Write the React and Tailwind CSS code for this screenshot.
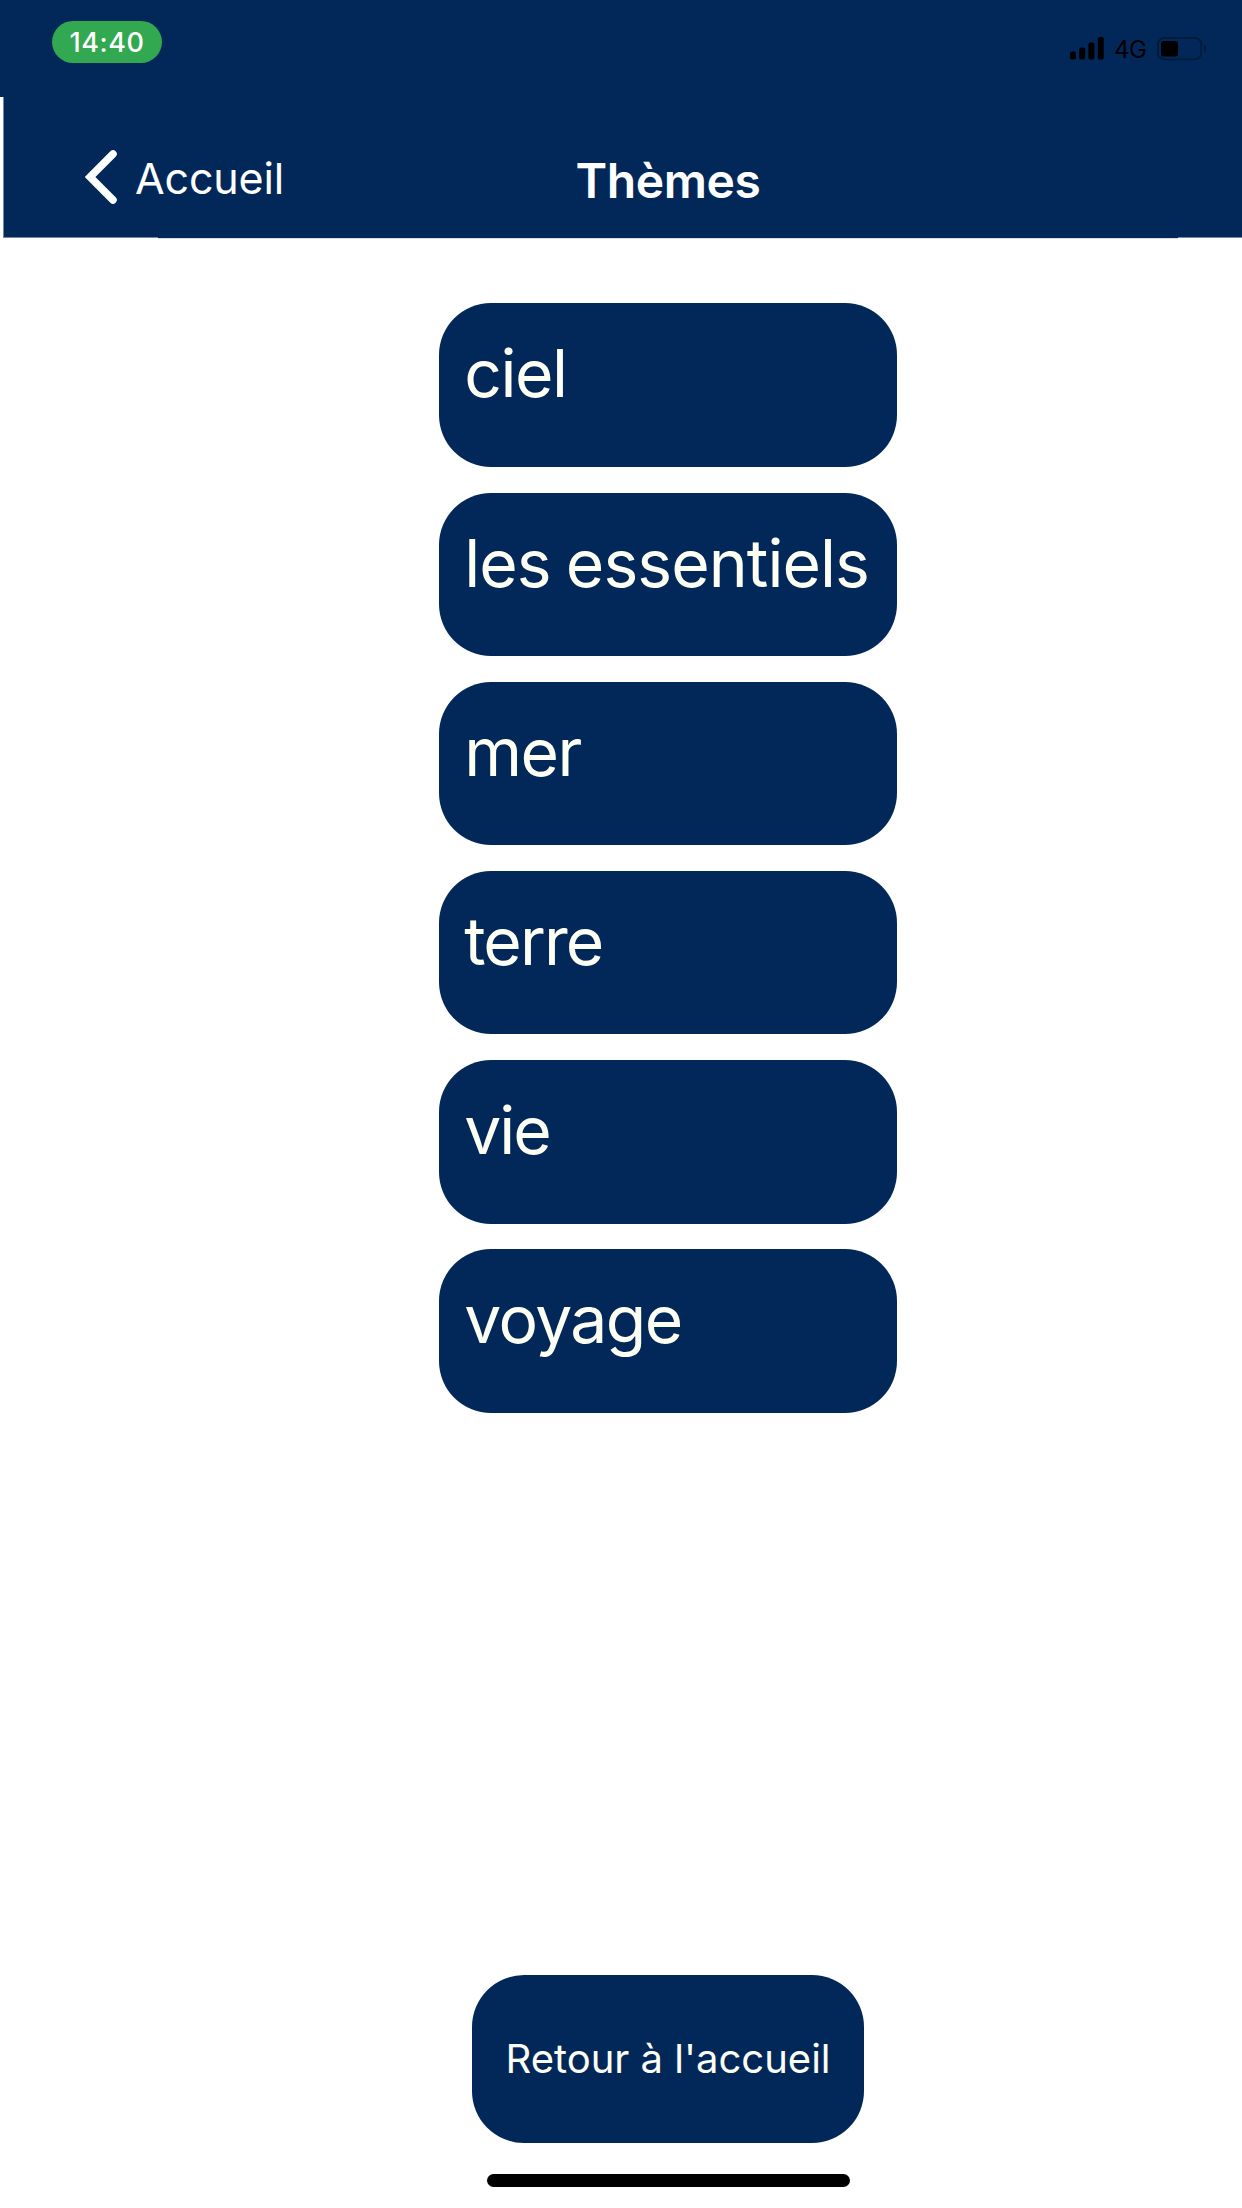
import React from "react";

const themes = [
  { name: "ciel", tracking: "tracking-[-1.5px]" },
  { name: "les essentiels", tracking: "tracking-[-0.95px] [word-spacing:-2.5px]" },
  { name: "mer", tracking: "tracking-[-1.6px]" },
  { name: "terre", tracking: "tracking-[-1.9px]" },
  { name: "vie", tracking: "tracking-[-2.1px]" },
  { name: "voyage", tracking: "tracking-[-1.6px]" },
];

const StatusBar = () => (
  <div className="flex h-[97px] items-start justify-between bg-[#022859] pt-[21px] pl-[52px] pr-[35px]">
    <span className="flex h-[42px] w-[110px] items-center justify-center rounded-full bg-[#32a850] text-[27px] font-medium leading-none tracking-[0.5px] text-white">
      14:40
    </span>

    <div className="flex items-start pt-[15px] text-black">
      {/* Signal */}
      <svg width="35" height="24" viewBox="0 0 35 24" fill="currentColor">
        <rect x="0" y="15.5" width="6" height="8" rx="1.8" />
        <rect x="9.2" y="11.5" width="6" height="12" rx="1.8" />
        <rect x="18.4" y="6.5" width="6" height="17" rx="1.8" />
        <rect x="27.8" y="1" width="6" height="22.5" rx="1.8" />
      </svg>
      <span className="ml-[9px] w-[43px] pt-0.5 text-[24px] leading-6 tracking-[-0.4px]">4G</span>
      {/* Batterie */}
      <svg className="mt-px" width="50" height="24" viewBox="0 0 50 24">
        <rect x="0.9" y="0.9" width="43.4" height="21.4" rx="6.5" fill="none" stroke="#011b3b" strokeWidth="1.8" />
        <rect x="4" y="4" width="17" height="15.4" rx="2.5" fill="currentColor" />
        <path d="M47 7.5c3 1.2 3 6.8 0 8z" fill="#011b3b" />
      </svg>
    </div>
  </div>
);

const App = () => {
  return (
    <div className="flex h-[2208px] w-[1242px] flex-col bg-white font-['Inter',sans-serif]">
      <StatusBar />

      {/* Header */}
      <header className="ml-[3px] grid h-[141px] grid-cols-[1fr_auto_1fr] items-start border-b border-l border-[#7288a8] bg-[#022859] bg-clip-padding pl-[90px] text-white">
        <a href="#" className="-ml-[9px] mt-[53px] flex h-[54px] items-center gap-[18px]">
          <svg width="32" height="54" viewBox="0 0 32 54" fill="none" stroke="currentColor" strokeWidth="7.5" strokeLinecap="round">
            <path d="M28 4 5 27l23 23" />
          </svg>
          <span className="pt-px text-[43px] leading-[44px] tracking-[-0.15px]">Accueil</span>
        </a>
        <h1 className="mt-[59px] text-[48px] font-semibold leading-[50px] tracking-[-0.4px]">Thèmes</h1>
      </header>
      <div className="-mt-px ml-[158px] h-0.5 w-[1020px] border-b border-[#dcdfd9] bg-[#022859]" />

      {/* Liste des thèmes */}
      <main className="flex flex-col items-center gap-[25.83px] pl-[94px] pt-[64.3px]">
        {themes.map((theme) => (
          <button
            key={theme.name}
            className="flex h-[163.4px] w-[458.4px] items-start rounded-[52px] bg-[#022859] pl-[25.5px] pt-[30px] text-[#fdfff2]"
          >
            <span className={`text-[66px] leading-[81px] ${theme.tracking}`}>{theme.name}</span>
          </button>
        ))}
      </main>

      {/* Retour */}
      <footer className="mt-auto flex flex-col items-center pb-[21px] pl-[94px]">
        <button className="h-[167.5px] w-[392px] rounded-[52px] bg-[#022859] text-[40px] text-[#fdfff2]">
          Retour à l'accueil
        </button>
        <div className="mt-[31.5px] h-[13px] w-[363px] rounded-full bg-black" />
      </footer>
    </div>
  );
};

export default App;
